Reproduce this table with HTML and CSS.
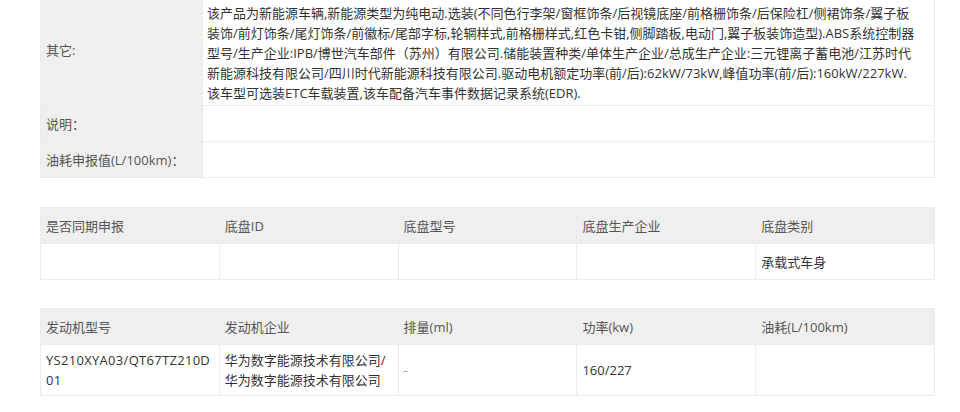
FILE: index.html
```html
<!DOCTYPE html>
<html lang="zh-CN">
<head>
    <meta charset="UTF-8">
    <meta name="viewport" content="width=device-width, initial-scale=1.0">
    <link rel="stylesheet" href="styles.css">
    <title>车型参数</title>
</head>
<body>
    <div class="container">
        <table class="info-table">
            <colgroup>
                <col class="label-col">
                <col>
            </colgroup>
            <tr class="tall">
                <th>其它:</th>
                <td>该产品为新能源车辆,新能源类型为纯电动.选装(不同色行李架/窗框饰条/后视镜底座/前格栅饰条/后保险杠/侧裙饰条/翼子板<br>装饰/前灯饰条/尾灯饰条/前徽标/尾部字标,轮辋样式,前格栅样式,红色卡钳,侧脚踏板,电动门,翼子板装饰造型).ABS系统控制器<br>型号/生产企业:IPB/博世汽车部件（苏州）有限公司.储能装置种类/单体生产企业/总成生产企业:三元锂离子蓄电池/江苏时代<br>新能源科技有限公司/四川时代新能源科技有限公司.驱动电机额定功率(前/后):62kW/73kW,峰值功率(前/后):160kW/227kW.<br>该车型可选装ETC车载装置,该车配备汽车事件数据记录系统(EDR).</td>
            </tr>
            <tr>
                <th>说明：</th>
                <td></td>
            </tr>
            <tr>
                <th>油耗申报值(L/100km)：</th>
                <td></td>
            </tr>
        </table>

        <table class="grid-table">
            <tr>
                <th>是否同期申报</th>
                <th>底盘ID</th>
                <th>底盘型号</th>
                <th>底盘生产企业</th>
                <th>底盘类别</th>
            </tr>
            <tr>
                <td></td>
                <td></td>
                <td></td>
                <td></td>
                <td>承载式车身</td>
            </tr>
        </table>

        <table class="grid-table">
            <tr>
                <th>发动机型号</th>
                <th>发动机企业</th>
                <th>排量(ml)</th>
                <th>功率(kw)</th>
                <th>油耗(L/100km)</th>
            </tr>
            <tr>
                <td class="code">YS210XYA03/QT67TZ210D01</td>
                <td>华为数字能源技术有限公司/华为数字能源技术有限公司</td>
                <td class="muted">-</td>
                <td>160/227</td>
                <td></td>
            </tr>
        </table>
    </div>
</body>
</html>
```

FILE: styles.css
```css
body {
    font-family: "Open Sans", "Noto Sans CJK SC", sans-serif;
    font-size: 13px;
    line-height: 20px;
    color: #333;
    margin: 0;
    padding: 0;
    background-color: #fff;
}

.container {
    width: 895px;
    margin: -6px 0 0 40px;
}

table {
    width: 100%;
    border-collapse: collapse;
    table-layout: fixed;
}

th,
td {
    padding: 5px;
    border: 1px solid #ebebeb;
    text-align: left;
    font-weight: normal;
}

th {
    background-color: #efefef;
    color: #555;
}

tr {
    height: 36px;
}

/* top table: labels on the left */
.info-table {
    margin-bottom: 29px;
}

.label-col {
    width: 162px;
}

.info-table th {
    vertical-align: middle;
}

.info-table td {
    white-space: nowrap;
    padding-left: 4px;
}

.info-table .tall td {
    padding-top: 8px;
    padding-bottom: 2px;
}

/* bottom tables: five equal columns */
.grid-table {
    margin-bottom: 28px;
}

.grid-table td {
    vertical-align: middle;
}

.code {
    word-break: break-all;
    letter-spacing: 0.3px;
}

.muted {
    color: #999;
}
```
